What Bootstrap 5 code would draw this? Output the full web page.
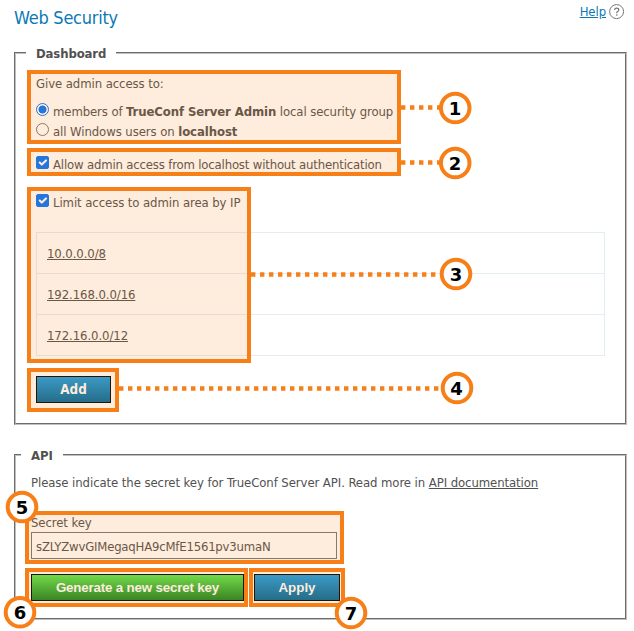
<!DOCTYPE html>
<html lang="en">
<head>
<meta charset="utf-8">
<title>Web Security</title>
<link href="https://cdn.jsdelivr.net/npm/bootstrap@5.3.0/dist/css/bootstrap.min.css" rel="stylesheet">
<style>
body{font:13px/20px "DejaVu Sans Condensed","DejaVu Sans",sans-serif;font-stretch:condensed;letter-spacing:-.08px;color:#515151;width:634px;height:631px;overflow:hidden;background:#fff}
.topline{height:43px;padding:8px 9px 0 14px}
h1{font-size:18px;line-height:20px;color:#0c78b5;font-weight:400;letter-spacing:-.25px}
.help-link{color:#0c78b5;line-height:16px;margin-top:-4px}
.help-icon{margin-top:-4px}
.help-group{gap:3px}
fieldset.panel{border:2px groove #c0c0c0;margin:0 7px 0 14px}
fieldset.panel>legend{float:none;width:auto;margin:0;padding:1px 10px 0;height:20px;font-size:13px;line-height:20px;font-weight:700;letter-spacing:-.12px}
.dash{height:382px;padding:0 20px 0 10px}
.api{height:175px;margin-top:20px!important;padding:0 10px 0 5px}
.inner{padding:11px 0 0 10px}
.api .inner{padding:8px 0 0 10px}
.opt{height:20px;gap:4px}
.opt span{padding-top:2px}
.members{margin-top:7px;letter-spacing:-.1px}
.allow{margin-top:13px;letter-spacing:-.17px}
.limit{margin-top:18px}
.opt input.form-check-input{width:13px;height:13px;margin:0 0 3px;border-color:#767676;flex:none}
.opt input[type=checkbox].form-check-input{border-radius:2px}
.opt input.form-check-input:checked{background-color:#0075ff;border-color:#0075ff}
.opt input[type=checkbox].form-check-input:checked{background-size:14px 14px;background-position:center}
.opt input[type=radio].form-check-input:checked{background:radial-gradient(circle,#0075ff 0 3.7px,#fff 4.3px)}
.ips{border:1px solid #e3edf2;width:569px;margin-top:20px}
.ips>div{height:41px;padding:0 10px;line-height:42px}
.ips>div:first-child{height:40px}
.ips>div+div{border-top:1px solid #e3edf2}
a{color:#515151}
.cmd{height:27px;padding:0;border:1px solid #000;border-radius:0;color:#fff;letter-spacing:0;font:bold 13.33px/24px "Liberation Sans",sans-serif;background:linear-gradient(#1b9fe5,#016a9e)}
.cmd:hover{color:#fff}
.add-btn{width:75px;margin-top:20px;font-family:"DejaVu Sans Condensed","DejaVu Sans",sans-serif}
.gen-btn{width:213px;letter-spacing:-.17px;background:linear-gradient(#5be953,#198627)}
.apply-btn{width:86px}
.key-label{margin-top:20px}
.key-input{display:block;width:306px;height:27px;margin-top:-1px;padding:2px 4px 0;border:1px solid #767676;border-radius:0;font:inherit;letter-spacing:-.2px;color:#515151}
.actions{margin-top:15px;gap:10px}
.callouts{pointer-events:none}
.callouts text{font:bold 18px "DejaVu Sans",sans-serif;text-anchor:middle;fill:#000}
</style>
<script src="https://cdn.jsdelivr.net/npm/bootstrap@5.3.0/dist/js/bootstrap.bundle.min.js"></script>
</head>
<body class="position-relative">
<header class="topline d-flex justify-content-between align-items-start">
  <h1 class="m-0">Web Security</h1>
  <div class="help-group d-flex align-items-start">
    <a class="help-link" href="#">Help</a>
    <svg class="help-icon" width="16" height="16" viewBox="0 0 16 16"><circle cx="7.6" cy="7.6" r="7" fill="none" stroke="#777"/><path d="M5.6 6.1Q5.6 4.2 7.7 4.2T9.8 6Q9.8 7 7.8 8.2V9.3M7.8 10.3V11.7" fill="none" stroke="#777" stroke-width="1.2"/></svg>
  </div>
</header>
<fieldset class="panel dash">
  <legend>Dashboard</legend>
  <div class="inner">
    <div class="intro">Give admin access to:</div>
    <label class="opt members d-flex align-items-center"><input class="form-check-input" type="radio" name="who" checked><span>members of <b>TrueConf Server Admin</b> local security group</span></label>
    <label class="opt d-flex align-items-center"><input class="form-check-input" type="radio" name="who"><span>all Windows users on <b>localhost</b></span></label>
    <label class="opt allow d-flex align-items-center"><input class="form-check-input" type="checkbox" checked><span>Allow admin access from localhost without authentication</span></label>
    <label class="opt limit d-flex align-items-center"><input class="form-check-input" type="checkbox" checked><span>Limit access to admin area by IP</span></label>
    <div class="ips">
      <div><a href="#">10.0.0.0/8</a></div>
      <div><a href="#">192.168.0.0/16</a></div>
      <div><a href="#">172.16.0.0/12</a></div>
    </div>
    <button class="btn cmd add-btn">Add</button>
  </div>
</fieldset>
<fieldset class="panel api">
  <legend>API</legend>
  <div class="inner">
    <div class="api-note">Please indicate the secret key for TrueConf Server API. Read more in <a href="#">API documentation</a></div>
    <label class="d-block key-label" for="key">Secret key</label>
    <input id="key" class="form-control key-input" value="sZLYZwvGIMegaqHA9cMfE1561pv3umaN">
    <div class="d-flex actions"><button class="btn cmd gen-btn">Generate a new secret key</button><button class="btn cmd apply-btn">Apply</button></div>
  </div>
</fieldset>
<svg class="callouts position-absolute top-0 start-0" width="634" height="631">
  <g fill="#f77f17" fill-opacity=".15" stroke="#f77f17" stroke-width="4">
    <rect x="29" y="72" width="370" height="70"/><rect x="29" y="150" width="370" height="24"/><rect x="29" y="189" width="220" height="172"/><rect x="29" y="370" width="88" height="40"/>
    <rect x="27" y="513" width="315" height="49"/><rect x="27" y="570" width="219" height="35"/><rect x="251" y="570" width="92" height="35"/>
  </g>
  <path d="M401 107.5H440M401 162.5H440M251 274.5H440M119 388.5H441" stroke="#f77f17" stroke-width="4.4" stroke-dasharray="4.4 4.6" fill="none"/>
  <g fill="#fff" stroke="#f77f17" stroke-width="4">
    <circle cx="455.2" cy="108" r="14.3"/><circle cx="455.2" cy="163" r="14.3"/><circle cx="456" cy="274" r="14.3"/><circle cx="457" cy="388" r="14.3"/><circle cx="22" cy="507" r="14.3"/><circle cx="20" cy="612.3" r="14.3"/><circle cx="351" cy="613" r="14.3"/>
  </g>
  <text x="455" y="115">1</text><text x="455" y="170">2</text><text x="456" y="281">3</text><text x="456.5" y="395">4</text><text x="22" y="514">5</text><text x="20" y="619">6</text><text x="351" y="620">7</text>
</svg>
</body>
</html>
